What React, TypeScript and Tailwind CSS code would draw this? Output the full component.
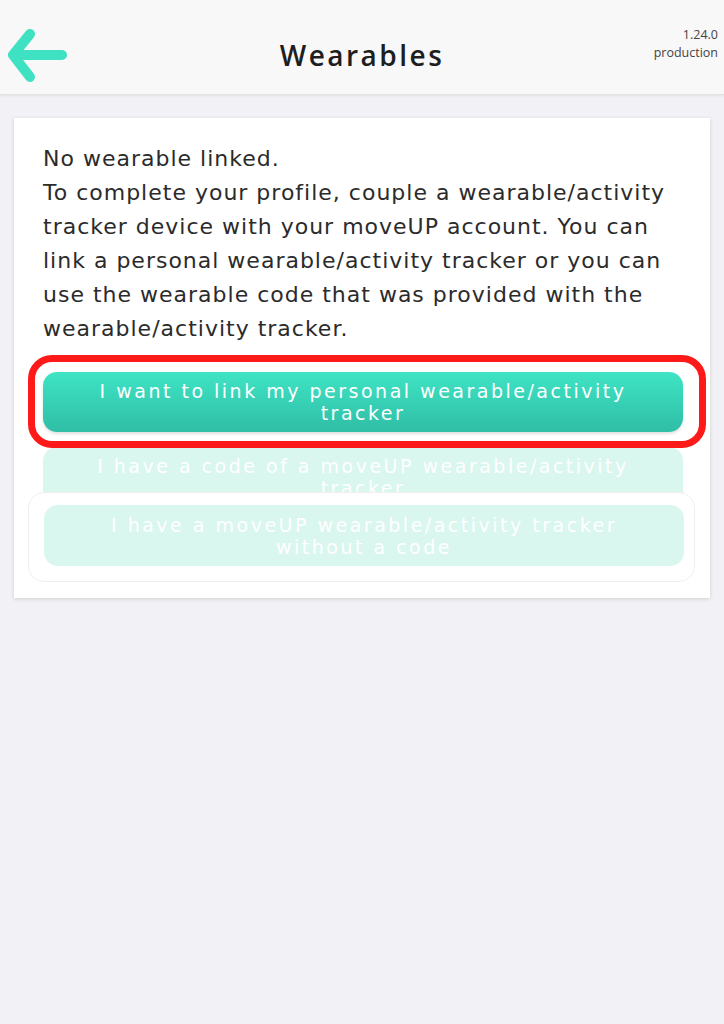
const BTN_TEXT = "text-white text-[19px] leading-[22px] tracking-[2.5px] text-center"

function BackArrow() {
  return (
    <svg width="62" height="58" viewBox="0 0 62 58" fill="none">
      <path
        d="M56 28H8M24 7L7 28L24 50"
        stroke="#3ee2c2"
        strokeWidth="10"
        strokeLinecap="round"
        strokeLinejoin="round"
      />
    </svg>
  )
}

export default function App() {
  return (
    <div
      className="min-h-[1024px] bg-[#f2f2f6] text-[#2b2b2b]"
      style={{ fontFamily: '"DejaVu Sans", "Noto Sans", sans-serif' }}
    >
      {/* Header */}
      <header className="h-[95px] bg-[#f8f8f8] border-b border-[#e2e2e2] shadow-[0_1px_3px_rgba(0,0,0,0.08)] flex items-start relative">
        <div className="pl-[6px] pt-[27px]">
          <BackArrow />
        </div>
        <h1
          className="absolute left-0 right-0 top-[36px] text-center text-[28px] leading-[38px] font-semibold tracking-[2.5px] text-[#1e1e1e] pointer-events-none"
          style={{ fontFamily: '"Open Sans", sans-serif' }}
        >
          Wearables
        </h1>
        <div
          className="ml-auto pt-[26px] pr-[6px] text-right text-[12.5px] leading-[18px] text-[#444]"
          style={{ fontFamily: '"Open Sans", sans-serif' }}
        >
          <div>1.24.0</div>
          <div>production</div>
        </div>
      </header>

      {/* Content */}
      <main className="px-[14px] pt-[23px]">
        <div className="bg-white shadow-[0_1px_4px_rgba(0,0,0,0.15)] pl-[29px] pr-[27px] pt-[24px] pb-[16px]">
          <p className="text-[22px] leading-[34px] tracking-[1px] text-[#2b2b2b]">
            No wearable linked.
            <br />
            To complete your profile, couple a wearable/activity tracker device with your moveUP account. You can link a personal wearable/activity tracker or you can use the wearable code that was provided with the wearable/activity tracker.
          </p>

          {/* Primary option with highlight */}
          <div className="relative mt-[26px]">
            <button className={`w-full h-[60px] rounded-[14px] bg-gradient-to-b from-[#3fe4c5] to-[#2fbea6] shadow-[0_2px_3px_rgba(0,0,0,0.12)] ${BTN_TEXT}`}>
              I want to link my personal wearable/activity
              <br />
              tracker
            </button>
            <div className="absolute left-[-15px] right-[-23px] top-[-17px] bottom-[-16px] border-[7px] border-[#ff1a1a] rounded-[24px] pointer-events-none" />
          </div>

          <button className={`mt-[15px] w-full h-[60px] rounded-[14px] bg-[#d9f6ef] ${BTN_TEXT}`}>
            I have a code of a moveUP wearable/activity
            <br />
            tracker
          </button>

          <div className="relative -mt-[15px] -ml-[15px] w-[667px] bg-white rounded-[16px] border border-[#f3eeee] pt-[12px] pb-[15px] pl-[15px] pr-[10px]">
            <button className={`w-full h-[61px] rounded-[14px] bg-[#d9f6ef] ${BTN_TEXT}`}>
              I have a moveUP wearable/activity tracker
              <br />
              without a code
            </button>
          </div>
        </div>
      </main>
    </div>
  )
}
